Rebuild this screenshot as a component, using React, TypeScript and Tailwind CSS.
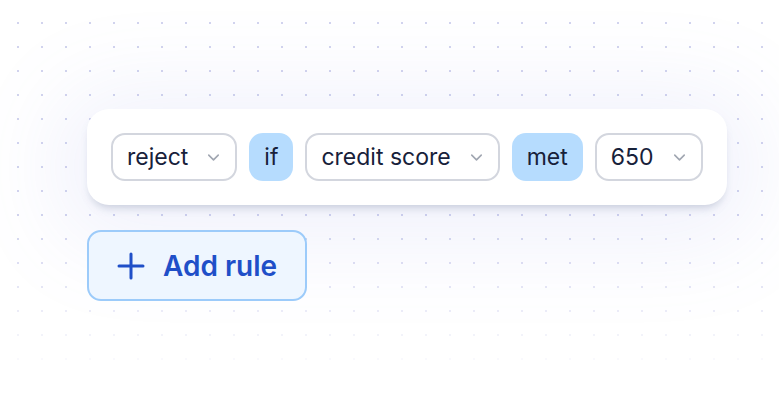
import { ChevronDown } from "lucide-react"

const font = { fontFamily: "Inter, 'Noto Sans', sans-serif" }

function Select({ label }: { label: string }) {
  return (
    <div className="flex h-12 items-center gap-4 rounded-[14px] border-2 border-[#d3d6de] bg-white pl-[14px] pr-[12px]">
      <span className="text-[23px] leading-none text-[#17213a]">{label}</span>
      <ChevronDown className="h-[19px] w-[19px] text-[#a0a6b1]" strokeWidth={2} />
    </div>
  )
}

function Keyword({ label }: { label: string }) {
  return (
    <div className="flex h-12 items-center rounded-[14px] bg-[#b6dcfe] px-[15px]">
      <span className="text-[23px] leading-none text-[#17213a]">{label}</span>
    </div>
  )
}

export default function App() {
  return (
    <div className="relative h-[401px] w-[779px] overflow-hidden bg-white" style={font}>
      {/* dot grid */}
      <div className="pointer-events-none absolute inset-0 bg-[radial-gradient(circle,#d2d4ee_1px,transparent_1.4px)] bg-[size:24px_24px] bg-[position:6px_11px] [mask-image:linear-gradient(to_bottom,black_55%,transparent_95%)]" />

      <div className="relative flex flex-col items-start gap-[25px] pl-[87px] pt-[109px]">
        <div className="flex items-center gap-3 rounded-[22px] bg-white p-6 shadow-[0_6px_10px_-4px_rgba(100,116,150,0.35),0_10px_90px_30px_rgba(120,130,230,0.10)]">
          <Select label="reject" />
          <Keyword label="if" />
          <Select label="credit score" />
          <Keyword label="met" />
          <Select label="650" />
        </div>

        <button className="flex h-[71px] items-center gap-[18px] rounded-[14px] border-2 border-[#9ccbfa] bg-[#eef6ff] pl-[28px] pr-[28px]">
          <svg width="28" height="28" viewBox="0 0 28 28" fill="none">
            <path d="M14 2v24M2 14h24" stroke="#1f4fc8" strokeWidth="3" strokeLinecap="round" />
          </svg>
          <span className="text-[28px] font-semibold leading-none text-[#1f4fc8]">Add rule</span>
        </button>
      </div>
    </div>
  )
}
